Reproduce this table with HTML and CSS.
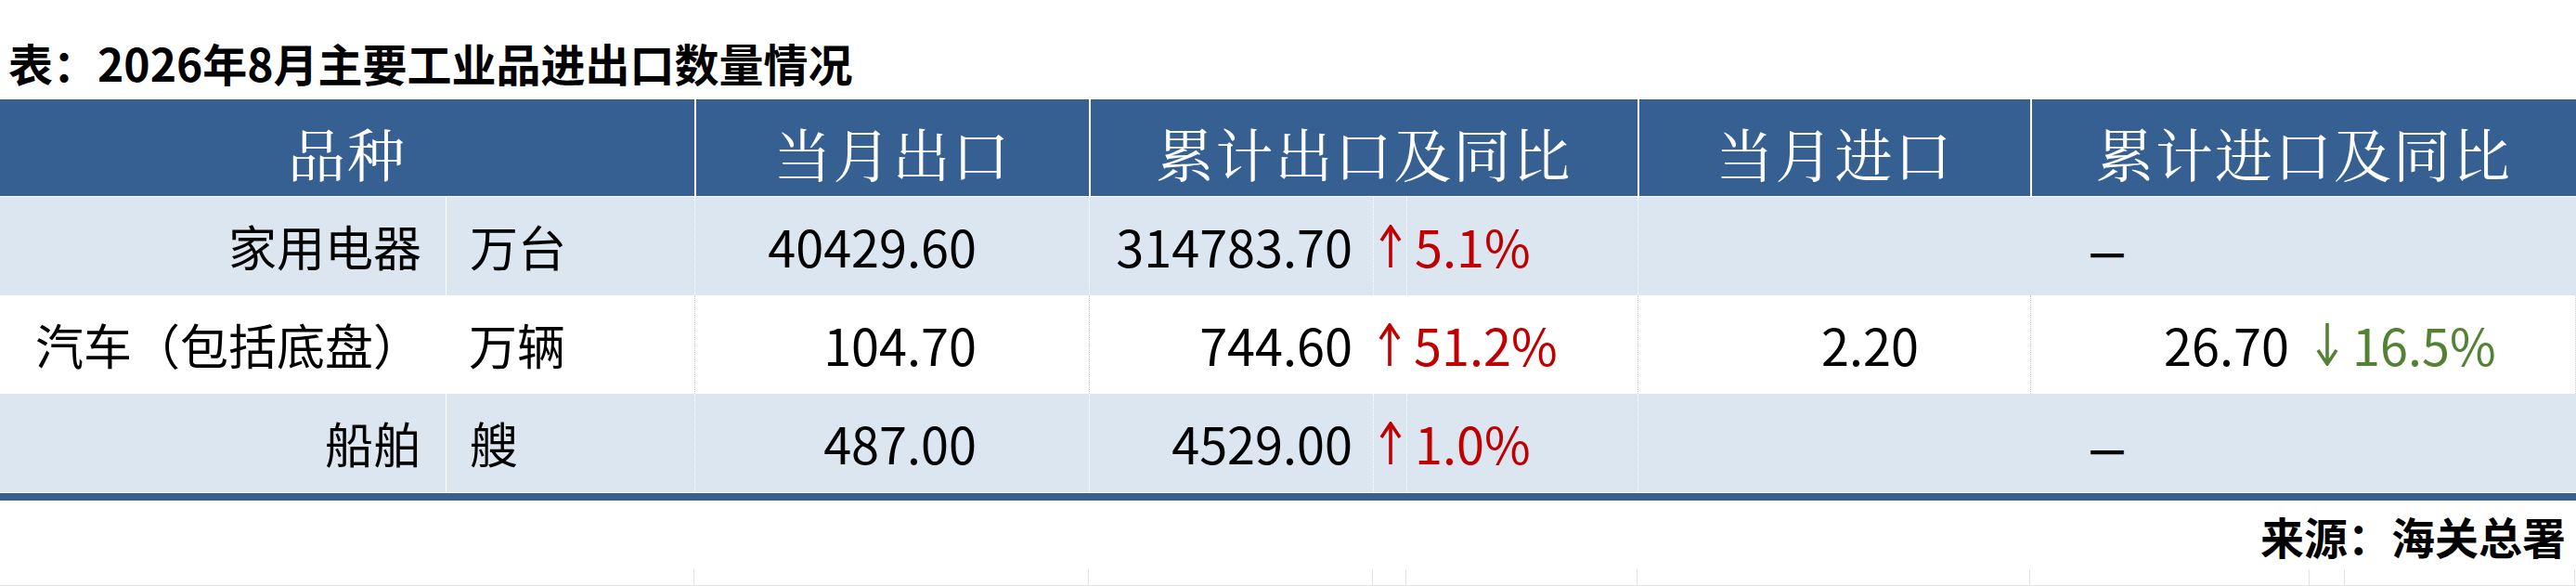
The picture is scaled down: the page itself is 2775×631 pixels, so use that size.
FILE: index.html
```html
<!DOCTYPE html>
<html lang="zh-CN">
<head>
<meta charset="utf-8">
<title>2026年8月主要工业品进出口数量情况</title>
<link rel="stylesheet" href="styles.css">
</head>
<body>
<div class="page">
  <div class="title">表：2026年8月主要工业品进出口数量情况</div>

  <div class="grid head">
    <div class="h span2">品种</div>
    <div class="h">当月出口</div>
    <div class="h span3">累计出口及同比</div>
    <div class="h">当月进口</div>
    <div class="h span3">累计进口及同比</div>
  </div>

  <div class="grid row shade">
    <div class="c name">家用电器</div>
    <div class="c unit">万台</div>
    <div class="c mexp">40429.60</div>
    <div class="c cnum">314783.70</div>
    <div class="c arr"><svg class="ico" viewBox="0 0 24 46" width="24" height="46"><path d="M12 3 V46" stroke="#c00000" stroke-width="3.6" fill="none"/><path d="M2 17 L12 2 L22 17" stroke="#c00000" stroke-width="3.6" fill="none" stroke-linejoin="miter"/></svg></div>
    <div class="c pct up">5.1%</div>
    <div class="c merged"><span class="dash">—</span></div>
  </div>

  <div class="grid row plain">
    <div class="c name">汽车（包括底盘）</div>
    <div class="c unit nob">万辆</div>
    <div class="c mexp">104.70</div>
    <div class="c cnum">744.60</div>
    <div class="c arr nob"><svg class="ico" viewBox="0 0 24 46" width="24" height="46"><path d="M12 3 V46" stroke="#c00000" stroke-width="3.6" fill="none"/><path d="M2 17 L12 2 L22 17" stroke="#c00000" stroke-width="3.6" fill="none"/></svg></div>
    <div class="c pct up nob">51.2%</div>
    <div class="c mimp">2.20</div>
    <div class="c inum">26.70</div>
    <div class="c arr nob"><svg class="ico" viewBox="0 0 24 46" width="24" height="46"><path d="M12 0 V43" stroke="#548235" stroke-width="3.6" fill="none"/><path d="M2 29 L12 44 L22 29" stroke="#548235" stroke-width="3.6" fill="none"/></svg></div>
    <div class="c pct down nob last">16.5%</div>
  </div>

  <div class="grid row shade">
    <div class="c name">船舶</div>
    <div class="c unit">艘</div>
    <div class="c mexp">487.00</div>
    <div class="c cnum">4529.00</div>
    <div class="c arr"><svg class="ico" viewBox="0 0 24 46" width="24" height="46"><path d="M12 3 V46" stroke="#c00000" stroke-width="3.6" fill="none"/><path d="M2 17 L12 2 L22 17" stroke="#c00000" stroke-width="3.6" fill="none"/></svg></div>
    <div class="c pct up">1.0%</div>
    <div class="c merged"><span class="dash">—</span></div>
  </div>

  <div class="bar"></div>
  <div class="source">来源：海关总署</div>

  <div class="grid tail">
    <div class="t span2"></div>
    <div class="t"></div>
    <div class="t"></div>
    <div class="t"></div>
    <div class="t"></div>
    <div class="t"></div>
    <div class="t"></div>
    <div class="t"></div>
    <div class="t lastt"></div>
  </div>
</div>
</body>
</html>
```

FILE: styles.css
```css
html, body {
  margin: 0;
  padding: 0;
  background: #ffffff;
}

.page {
  width: 2775px;
  font-family: "Noto Sans CJK SC", "Noto Sans", sans-serif;
  color: #000000;
}

.title {
  box-sizing: border-box;
  height: 107px;
  padding: 43px 0 0 9px;
  font-size: 48px;
  line-height: 48px;
  font-weight: 700;
  white-space: nowrap;
}

.grid {
  display: grid;
  grid-template-columns: 480px 268px 425px 306px 36px 249px 423px 301px 38px 249px;
}

.span2 { grid-column: span 2; }
.span3 { grid-column: span 3; }

/* header */
.head {
  background: #376092;
  height: 105px;
  border-bottom: 1px solid #ffffff;
  box-sizing: border-box;
}

.h {
  display: flex;
  align-items: center;
  justify-content: center;
  padding-top: 10px;
  box-sizing: border-box;
  color: #ffffff;
  font-family: "Noto Serif CJK SC", "Noto Sans CJK SC", serif;
  font-size: 62px;
  font-weight: 400;
  letter-spacing: 2px;
  border-left: 2px solid #ffffff;
}

.h:first-child { border-left: none; }

/* body rows */
.row { height: 106px; }

.shade { background: #dce6f1; }
.plain { background: #ffffff; }

.c {
  display: flex;
  align-items: center;
  box-sizing: border-box;
  font-size: 54px;
  line-height: 1;
  white-space: nowrap;
}

.name { justify-content: flex-end; padding-right: 26px; font-size: 52px; }
.unit { justify-content: flex-start; padding-left: 25px; font-size: 52px; }
.mexp { justify-content: flex-end; padding-right: 121px; }
.cnum { justify-content: flex-end; padding-right: 22px; }
.arr  { justify-content: center; }
.pct  { justify-content: flex-start; padding-left: 8px; }
.mimp { justify-content: flex-end; padding-right: 120px; }
.inum { justify-content: flex-end; padding-right: 22px; }

.up   { color: #c00000; }
.down { color: #548235; }

.merged {
  grid-column: span 4;
  justify-content: center;
}

.dash {
  font-size: 44px;
  font-weight: 700;
  position: relative;
  top: 4px;
}

.ico { display: block; }

/* shaded row lines */
.shade .unit { border-left: 1px solid #ffffff; }
.shade .mexp,
.shade .cnum,
.shade .arr,
.shade .pct,
.shade .merged { border-left: 1px dotted #ffffff; }

/* white row lines */
.plain .mexp,
.plain .cnum,
.plain .mimp,
.plain .inum { border-left: 1px dotted #c8c8c8; }
.plain .last { border-right: 1px dotted #d0d0d0; }

/* bottom bar + source */
.bar {
  margin-top: 1px;
  height: 8px;
  background: #376092;
}

.source {
  box-sizing: border-box;
  height: 74px;
  display: flex;
  align-items: center;
  justify-content: flex-end;
  padding-right: 11px;
  font-size: 47px;
  font-weight: 700;
  white-space: nowrap;
}

.tail {
  height: 18px;
  box-sizing: border-box;
  border-bottom: 1px solid #e3e3e3;
}

.t { border-right: 1px solid #e3e3e3; }
.t.lastt { border-right: 1px solid #e3e3e3; margin-right: 1px; }
.tail .t:first-child { border-right: 1px solid #e3e3e3; }
```
